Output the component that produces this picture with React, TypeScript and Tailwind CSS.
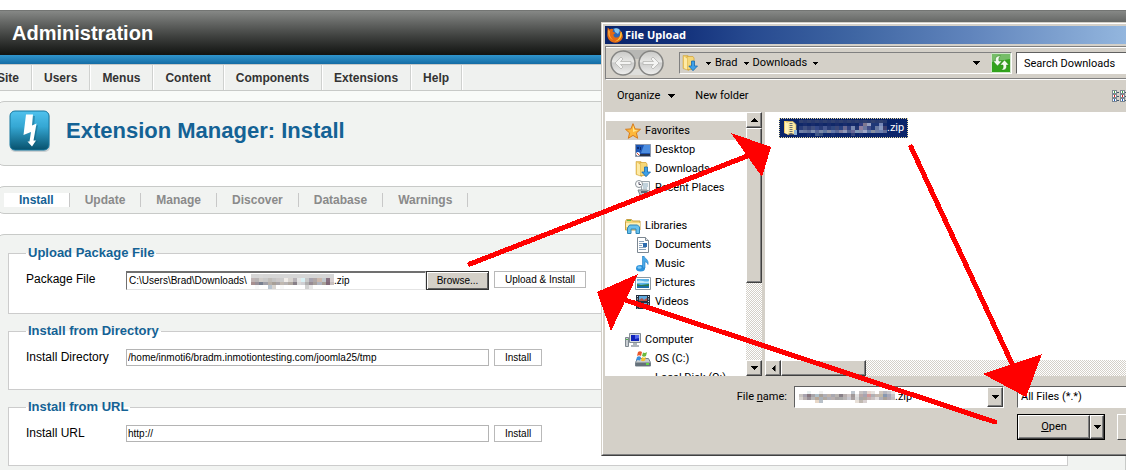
import React from "react";

const dialogFont = "font-['Roboto','Noto_Sans',sans-serif]";
const raised =
  "border border-t-white border-l-white border-r-[#404040] border-b-[#404040] bg-[#d4d0c8] shadow-[inset_-1px_-1px_0_#808080]";
const dither =
  "bg-[repeating-conic-gradient(#d4d0c8_0_25%,#ffffff_0_50%)] bg-[length:2px_2px]";

function Mosaic({ rows, className }: { rows: string[][]; className: string }) {
  return (
    <svg
      className={className}
      viewBox={`0 0 ${rows[0].length} ${rows.length}`}
      preserveAspectRatio="none"
      shapeRendering="crispEdges"
      aria-hidden="true"
    >
      {rows.map((row, y) =>
        row.map((c, x) => <rect key={`${x}-${y}`} x={x} y={y} width="1" height="1" fill={c} />)
      )}
    </svg>
  );
}

const w = "#ffffff";
const pathMosaic = [
  ["#d6d6d6", "#d6d6d6", "#d8d8d8", "#d6d6d6", "#d6d6d6", "#d6d6d6", "#d6d6d6", "#d6d6d6", "#d6d6d6", "#d6d6d6", "#d6d6d6", "#d6d6d6", "#d6d6d6", "#d6d6d6", "#d6d6d6", "#d6d6d6", "#d6d6d6", "#d6d6d6", "#d6d6d6", "#d6d6d6"],
  ["#c0b4b4", "#b8b4b4", "#d0ccc8", "#c8c8c8", "#c0bcb8", "#c4c4c4", "#ccc8c8", "#cccccc", "#f0ece8", "#d8d4d0", "#b8b4b8", "#e4e4e4", "#d8f0f4", "#c8c8c8", "#a8a4b0", "#b0a8a8", "#ccb8ac", "#c0c8cc", "#887080", "#d8d0d0"],
  ["#a89090", "#989098", "#788090", "#a0a0a8", "#b8b0a8", "#a8a098", "#a8a4a8", "#c0b8b0", "#b8b4b4", "#b0a8a0", "#888088", "#d8d8d8", "#d0d0d4", "#b0b0b0", "#988c94", "#a8a09c", "#b0b4c0", "#a8a098", "#806878", "#c8c0c0"],
  [w, "#f8f8f8", w, w, "#b8c4d0", "#d8d4d0", w, "#f8f8f8", w, w, w, w, w, "#d0d0d0", "#e8e8e8", w, w, w, w, w],
];
const selectedMosaic = [
  ["#304070", "#283a70", "#304070", "#283a70", "#304070", "#283a70", "#304070", "#283a70", "#304070", "#283a70", "#304070", "#283a70", "#304070", "#283a70", "#304070", "#283a70", "#304070", "#283a70", "#304070", "#283a70", "#304070", "#283a70"],
  ["#102868", "#182c6c", "#102868", "#182c6c", "#102868", "#182c6c", "#102868", "#182c6c", "#102868", "#182c6c", "#102868", "#182c6c", "#102868", "#182c6c", "#102868", "#303c80", "#807890", "#98a0c0", "#203878", "#203878", "#7888b8", "#182c6c"],
  ["#283c78", "#405080", "#304078", "#405080", "#344888", "#283c78", "#485890", "#283c78", "#304880", "#3c4878", "#284080", "#686890", "#304080", "#7888b0", "#203470", "#9080a0", "#6c78a0", "#404c88", "#203878", "#6878a0", "#8898c0", "#404070"],
  ["#7080a8", "#6878a0", "#5c6c98", "#8090b0", "#586898", "#7888a8", "#6078a0", "#8088a0", "#6478a8", "#586898", "#8080a0", "#9098b8", "#506090", "#686898", "#8098b8", "#8890b0", "#a0a8c8", "#6078a8", "#8890a0", "#7080a8", "#6c80b0", "#606c98"],
  ["#0a246a", "#0a246a", "#142c70", "#0a246a", "#405888", "#304878", "#0a246a", "#0a246a", "#142c70", "#0a246a", "#0a246a", "#0a246a", "#0a246a", "#304078", "#0a246a", "#142c70", "#0a246a", "#0a246a", "#0a246a", "#0a246a", "#0a246a", "#0a246a"],
];
const nameMosaic = [
  [w, w, "#e8f0f0", w, w, "#f0f0f0", w, w, w, w, w, w, w, "#c0c8d0", w, "#c8c4c4", "#b8b8c0", "#e8d8d0", "#e8e4e0", w, "#d0c8c0", "#b8b8c0", "#c8c8cc", "#e4e0e0"],
  ["#c8c4c0", "#a8a4b0", "#887880", "#a8a4a8", "#b0c0c8", "#a8a098", "#b0b0b8", "#c0b4ac", "#a8a8b0", "#b8b4b0", "#888088", "#b8b0b0", "#d0c8c8", "#a09898", "#e0e0e0", "#b8a8a8", "#a8a4b0", "#d09898", "#b0b0b4", "#c4b8b0", "#c0b8a8", "#8898b0", "#a8a8b8", "#c8c4c8"],
  ["#d8d4d0", "#b8b0b0", "#989098", "#b8b8b8", "#b8a898", "#a8b0b8", "#b0a8a0", "#b0b0b8", "#b8b0b0", "#a8a4a4", "#a8a8a8", "#b8b4b4", "#c8c8d0", "#a8a0a0", "#d8d8d8", "#a8a8a8", "#b0a8a0", "#c4b0b0", "#c8c0c0", "#e0dcdc", "#b0b0b8", "#a8a098", "#b0a8b0", "#c0bcc0"],
  [w, w, w, w, "#e8d8c8", "#b8c0c8", w, w, w, w, w, w, w, w, "#e8e0d8", "#c0b8b0", "#d8d0d0", w, w, w, w, w, w, w],
];

function Caret({ className = "w-[7px] h-1" }: { className?: string }) {
  return (
    <svg className={`${className} shrink-0`} viewBox="0 0 7 4" shapeRendering="crispEdges" aria-hidden="true">
      <path d="M0 0h7v1h-1v1h-1v1h-1v1h-1v-1h-1v-1h-1v-1h-1z" fill="#000" />
    </svg>
  );
}

function FolderArrow() {
  return (
    <svg className="size-4 shrink-0" viewBox="0 0 16 16" aria-hidden="true">
      <path d="M1 .5h5l1 2v13l-6-2z" fill="#efc863" stroke="#c9a33b" strokeWidth=".5" />
      <path d="M5 1.500h6l1 1.500v11.500H5z" fill="#f5d778" stroke="#d5a73e" strokeWidth=".8" />
      <path d="M2 1.500l3 2v11l-3-1.500z" fill="#fdeaa6" />
      <path d="M9.500 6h3v5h3L11 15.700 6.800 11h2.700z" fill="#3da0e8" stroke="#1768ae" strokeWidth=".8" />
    </svg>
  );
}

const icons: Record<string, React.ReactNode> = {
  Favorites: (
    <>
      <path d="M8 .7l2.100 5.200 5.400.4-4.100 3.600 1.300 5.400L8 12.400l-4.700 2.900 1.300-5.400L.5 6.300l5.400-.4z" fill="#fdb83a" stroke="#d77c1c" />
      <path d="M8 2.500L9.500 7l3.500.3L8 9z" fill="#ffe68a" />
    </>
  ),
  Desktop: (
    <>
      <path d="M.5 2.500h15v12H.5z" fill="#1d56b5" stroke="#8f9aae" />
      <path d="M9 3h6v8H6z" fill="#4b8de0" />
      <path d="M1 12h14v2H1z" fill="#25324a" />
      <path d="M2 5h2v2H2zM5 5h1v3H5z" fill="#0b2b70" />
      <circle cx="3" cy="12" r="2" fill="#fff" />
      <path d="M2 11h1v1H2zM3 12h1v1H3z" fill="#e14a2a" />
    </>
  ),
  "Recent Places": (
    <>
      <path d="M6.500 1.500h8v9h-8z" fill="#f3f5f6" stroke="#9aa4aa" />
      <path d="M8 4h5M8 6h5M8 8h4" stroke="#8faec0" />
      <path d="M3 10h9l3 5H5z" fill="#c2c9ce" stroke="#78838a" />
      <path d="M6 12h6" stroke="#5c6a73" strokeWidth="2" />
      <circle cx="4" cy="4" r="3.500" fill="#fff" stroke="#8b949a" />
      <path d="M4 2v2.500h2" fill="none" stroke="#556" />
    </>
  ),
  Libraries: (
    <>
      <path d="M.5 3.500l1-2h5l1 1.500h7.500v9H.5z" fill="#f3d678" stroke="#c8a144" />
      <path d="M1 5h14v4H1z" fill="#fdf0b5" />
      <path d="M2 2h4v1H2z" fill="#65b947" />
      <path d="M2.500 15.500V10l2-3h8l2 2v6.500H11V11H6v4.500z" fill="#66c1ed" stroke="#3086b7" />
    </>
  ),
  Documents: (
    <>
      <path d="M2.500.5h8l3 3v12h-11z" fill="#fff" stroke="#7c8791" />
      <path d="M10.500.5v3h3" fill="#dfe5ea" stroke="#7c8791" />
      <path d="M4 4.500h5M4 6.500h4M4 8.500h3M4 10.500h7M4 12.500h7" stroke="#8ba4bc" />
      <path d="M8 6h4v4H8z" fill="#2c6caf" />
    </>
  ),
  Music: (
    <>
      <ellipse cx="5.500" cy="12.300" rx="4.500" ry="3.300" fill="#2b93dc" />
      <ellipse cx="4.500" cy="11.500" rx="2" ry="1.200" fill="#7cc6f4" />
      <path d="M7.500 0H9c.4 2.500 5 3.500 4 8.500C12.500 6.500 11 6 10 5.800V12H7.500z" fill="#4aa9e8" stroke="#1f7ac2" strokeWidth=".6" />
    </>
  ),
  Pictures: (
    <>
      <path d="M.5 2.500h15v12H.5z" fill="#fff" stroke="#8e99a2" />
      <path d="M2 4h12v9H2z" fill="#5bb3e8" />
      <path d="M2 6c4-2 8 2 12 0v2H2z" fill="#c3e8f7" />
      <path d="M2 9l4 1 8-1v2H2z" fill="#2d7a4c" />
      <path d="M2 11h12v2H2z" fill="#1b6da7" />
    </>
  ),
  Videos: (
    <>
      <path d="M1 1h14v14H1z" fill="#243040" />
      <path d="M4 2h8v5H4z" fill="#5da6dc" />
      <path d="M4 9h8v5H4z" fill="#5da6dc" />
      <path d="M4 6l3-2 2 2 3-2v3H4zM4 13l3-2 5-1v4H4z" fill="#b65145" />
      <path d="M2.500 2v13M13.500 2v13" stroke="#e8ecef" strokeDasharray="1 1.500" />
    </>
  ),
  Computer: (
    <>
      <path d="M.5 5.500h3v9h-3z" fill="#c7ccd1" stroke="#7f8890" />
      <path d="M1 7h2v1H1z" fill="#4bb944" />
      <path d="M4.500 1.500h11v9h-11z" fill="#d8dce0" stroke="#838d96" />
      <path d="M6 3h8v6H6z" fill="#1022b8" />
      <path d="M10 3h4v3l-4 1z" fill="#5468ee" />
      <path d="M8 11h4v2h2v2H6v-2h2z" fill="#aeb5bb" />
    </>
  ),
  "OS (C:)": (
    <>
      <path d="M2.500 7.500h11l2 4v3.500H.5v-3.500z" fill="#c5ccd0" stroke="#74808a" />
      <path d="M1 11.500h14V15H1z" fill="#65717a" />
      <path d="M11 12h3v2h-3z" fill="#62d544" />
      <path d="M3 1q2-1.500 4 0L6 5Q4 3.500 2 5z" fill="#e9572b" />
      <path d="M8 1.500q2 1 4-.5l-1 4q-2 1.500-4 0z" fill="#6bb93b" />
      <path d="M2 6q2-1.500 4 0l-1 3.500q-2-1-4 0z" fill="#3a8fda" />
      <path d="M7 6q2 1.500 4 0l-1 3.500q-2 1.500-4 0z" fill="#f6c12c" />
    </>
  ),
};

function TreeRow({ name, root = false }: { name: string; root?: boolean }) {
  return (
    <button
      type="button"
      className={`flex h-[19px] w-full shrink-0 items-center gap-1 text-left whitespace-nowrap ${
        root ? "pl-[19px]" : "pl-[29px]"
      } ${name === "Favorites" ? "bg-[#d4d0c8]" : ""}`}
    >
      {name === "Downloads" ? (
        <FolderArrow />
      ) : (
        <svg className="size-4 shrink-0" viewBox="0 0 16 16" aria-hidden="true">
          {icons[name]}
        </svg>
      )}
      <span className="leading-[17px]">{name}</span>
    </button>
  );
}

function Firefox() {
  return (
    <svg className="size-4 shrink-0" viewBox="0 0 16 16" aria-hidden="true">
      <circle cx="8.500" cy="7.500" r="6.500" fill="#2a67b8" />
      <path d="M7 2c2-1.500 5-.5 6 1.500L11 7 8 5z" fill="#86c8ef" />
      <path d="M.7.500l2 2C4 1.500 5 1.700 6.500 2.500L5.500 4.500 8.500 6 6.500 7.500c-.5 3 4 4.300 6 1.500 1.300-2 .7-4-.5-6 3 2 4.500 5 3.500 8-1.300 3.500-4.500 4.800-7.500 4.700C3.500 15.500.3 12 .3 8c0-2.500.2-5 .4-7.500z" fill="#e36a14" />
      <path d="M14.500 4.500c1.200 5-1.500 9.800-7 10 3-1 5.800-3.400 5.800-8z" fill="#fccb3c" />
      <path d="M1.200 2.500L3 4.500c-.8 3 .2 6 3 8.500C2 11.500.5 7 1.200 2.500z" fill="#f8a43a" />
    </svg>
  );
}

function NavOrbs() {
  return (
    <svg className="h-7 w-[54px] shrink-0" viewBox="0 0 54 28" aria-hidden="true">
      <defs>
        <linearGradient id="orb" x1="0" y1="0" x2="0" y2="1">
          <stop offset="0" stopColor="#c8c8c6" />
          <stop offset=".45" stopColor="#e8e8e6" />
          <stop offset=".5" stopColor="#cccccb" />
          <stop offset="1" stopColor="#f0f0ef" />
        </linearGradient>
      </defs>
      <path d="M13 1h28v5q-14 8-28 0z" fill="#b7b7b4" />
      <path d="M13 26q14-12 28 0z" fill="#dededb" />
      <circle cx="13" cy="14" r="12" fill="url(#orb)" stroke="#858583" strokeWidth="1.500" />
      <circle cx="41" cy="14" r="12" fill="url(#orb)" stroke="#858583" strokeWidth="1.500" />
      <path d="M5 14l6-6 2 2-2.500 2.500H21v3H10.500L13 18l-2 2z" fill="#f4f4f3" stroke="#b5b5b3" strokeWidth=".8" />
      <path d="M49 14l-6-6-2 2 2.500 2.500H33v3h10.500L41 18l2 2z" fill="#f4f4f3" stroke="#b5b5b3" strokeWidth=".8" />
    </svg>
  );
}

function FileDialog() {
  return (
    <section
      aria-label="File Upload"
      className={`absolute top-[22px] right-0 left-[601px] overflow-hidden border border-r-0 border-[#d4d0c8] border-b-[#404040] bg-[#d4d0c8] text-[11px] leading-4 text-black ${dialogFont}`}
    >
      <div className="border-t border-b border-l border-t-white border-b-[#808080] border-l-white pt-[2px] pb-[14px] pl-[2px]">
        <header className="flex h-[18px] items-center gap-[2px] bg-[linear-gradient(90deg,#0a246a_0%,#12307a_14%,#274a90_28%,#3f66a3_48%,#6084bc_70%,#7fa2d0_88%,#93b6de_100%)] pl-[2px] text-white">
          <Firefox />
          <h2 className="font-['Noto_Sans',sans-serif] font-bold">File Upload</h2>
        </header>

        <div className="mt-[2px] flex h-[34px] items-center border-t border-b border-l border-[#808080] border-b-white pl-1 shadow-[inset_0_1px_0_#fff,inset_0_-1px_0_#808080]">
          <NavOrbs />
          <div className="ml-[15px] flex h-[22px] min-w-0 flex-1 items-center border border-t-[#808080] border-r-white border-b-white border-l-[#808080] pl-[2px]">
            <FolderArrow />
            <span className="ml-2"><Caret className="h-[3px] w-[5px]" /></span>
            <span className="ml-1">Brad</span>
            <span className="ml-[6px]"><Caret className="h-[3px] w-[5px]" /></span>
            <span className="ml-1">Downloads</span>
            <span className="ml-[6px]"><Caret className="h-[3px] w-[5px]" /></span>
            <span className="flex-1" />
            <Caret />
            <button type="button" aria-label="Refresh" className="ml-[11px]">
              <svg className="size-5" viewBox="0 0 20 20" aria-hidden="true">
                <path d="M.5.5h19v19H.5z" fill="#32a31c" stroke="#cfe6c9" />
                <path d="M1 1h18v5L1 9z" fill="#76bd68" />
                <path d="M9.500 3C5 2.500 4 5 4.500 8H2l4.500 5 4.500-5H8c-.5-2 0-4 1.500-5z" fill="#f2fbef" stroke="#257b17" strokeWidth=".5" />
                <path d="M10.500 17c4.500.5 5.500-2 5-5H18l-4.500-5L9 12h3c.5 2 0 4-1.500 5z" fill="#f2fbef" stroke="#257b17" strokeWidth=".5" />
              </svg>
            </button>
          </div>
          <input
            aria-label="Search"
            placeholder="Search Downloads"
            className="ml-1 h-[22px] w-[110px] border border-r-0 border-t-[#606060] border-b-white border-l-[#606060] bg-white pl-[7px] placeholder:text-black placeholder:opacity-100"
          />
        </div>

        <div className="flex h-8 items-center pl-3">
          <button type="button" className="flex items-center gap-2">
            Organize <Caret />
          </button>
          <button type="button" className="ml-5">New folder</button>
          <span className="flex-1" />
          <svg className="h-3 w-[14px]" viewBox="0 0 14 12" shapeRendering="crispEdges" aria-hidden="true">
            {[0, 8].map((x) =>
              [0, 4, 8].map((y) => (
                <g key={`${x}-${y}`}>
                  <path d={`M${x + 0.5} ${y + 0.5}h4v3h-4z`} fill="#fff" stroke="#7d8791" />
                  <path d={`M${x + 2} ${y + 1}h1v2h-1z`} fill={y === 0 ? "#3fa34a" : y === 4 ? "#e02020" : "#1d5fc0"} />
                  <path d={`M${x + 5} ${y + 2}h2v1h-2z`} fill="#40566b" />
                </g>
              ))
            )}
          </svg>
        </div>

        <div className="flex h-[264px]">
          <nav aria-label="Places" className="flex w-[141px] shrink-0 flex-col overflow-hidden bg-white pt-[9px] pl-px">
            <TreeRow name="Favorites" root />
            <TreeRow name="Desktop" />
            <TreeRow name="Downloads" />
            <TreeRow name="Recent Places" />
            <div className="h-[19px] shrink-0" />
            <TreeRow name="Libraries" root />
            <TreeRow name="Documents" />
            <TreeRow name="Music" />
            <TreeRow name="Pictures" />
            <TreeRow name="Videos" />
            <div className="h-[19px] shrink-0" />
            <TreeRow name="Computer" root />
            <TreeRow name="OS (C:)" />
            <TreeRow name="Local Disk (Q:)" />
          </nav>
          <div className={`flex w-4 shrink-0 flex-col ${dither}`}>
            <button type="button" aria-label="Scroll up" className={`grid h-4 place-items-center ${raised}`}>
              <Caret className="h-1 w-[7px] rotate-180" />
            </button>
            <div className={`h-[155px] ${raised}`} />
            <div className="flex-1" />
            <button type="button" aria-label="Scroll down" className={`grid h-4 place-items-center ${raised}`}>
              <Caret />
            </button>
          </div>
          <div className="w-[3px] shrink-0" />
          <div className="flex min-w-0 flex-1 flex-col bg-white">
            <div className="flex-1 pt-[6px] pl-[14px]">
              <button type="button" className="flex h-5 w-[129px] items-center border border-dotted border-[#e8dca0] bg-[#0a246a] pl-[3px] text-white">
                <svg className="size-4 shrink-0" viewBox="0 0 16 16" aria-hidden="true">
                  <path d="M1 1h4l1 2v12l-5-2z" fill="#efc863" />
                  <path d="M4 1.500h6l3 3V14H4z" fill="#fae9a3" stroke="#d5b256" strokeWidth=".7" />
                  <path d="M2 1.500l3 2v11l-3-1.500z" fill="#fff1b9" />
                  <path d="M8 3v11" stroke="#6b7075" strokeWidth="3" strokeDasharray="1 1" />
                  <path d="M11 10h3v5h-3z" fill="#8fb6d8" />
                </svg>
                <Mosaic rows={selectedMosaic} className="h-4 w-[88px] shrink-0" />
                <span>.zip</span>
              </button>
            </div>
            <div className={`flex h-4 ${dither}`}>
              <button type="button" aria-label="Scroll left" className={`grid w-4 place-items-center ${raised}`}>
                <Caret className="h-1 w-[7px] rotate-90" />
              </button>
              <div className={`w-[85px] ${raised}`} />
            </div>
          </div>
        </div>

        <div className="mt-[10px] flex items-center">
          <label htmlFor="filename" className="w-[189px] shrink-0 pr-[7px] text-right">
            File <u>n</u>ame:
          </label>
          <div className="flex h-[22px] min-w-0 flex-1 items-center border border-t-[#606060] border-r-white border-b-white border-l-[#606060] bg-white pl-1">
            <Mosaic rows={nameMosaic} className="h-3 w-24 shrink-0" />
            <input id="filename" defaultValue=".zip" className="min-w-0 flex-1" />
            <button type="button" aria-label="File name history" className={`grid h-5 w-4 place-items-center ${raised}`}>
              <Caret />
            </button>
          </div>
          <select
            aria-label="File type"
            className="ml-[13px] h-[22px] w-[109px] appearance-none border border-r-0 border-t-[#606060] border-b-white border-l-[#606060] bg-white pl-[3px]"
          >
            <option>All Files (*.*)</option>
          </select>
        </div>

        <div className="mt-[6px] flex h-[26px] justify-end">
          <div className="flex w-[88px] border border-black">
            <button type="button" className={`flex-1 text-center ${raised}`}>
              <u>O</u>pen
            </button>
            <button type="button" aria-label="Open options" className={`grid w-[14px] place-items-center ${raised}`}>
              <Caret />
            </button>
          </div>
          <button type="button" aria-label="Cancel" className="ml-3 w-[9px] border border-r-0 border-t-white border-b-[#404040] border-l-white" />
        </div>
      </div>
    </section>
  );
}

const smallButton = "h-[17px] border border-[#b9b9b9] bg-white px-[10px] text-[10px] leading-[15px] text-black";
const textBox = "h-[17px] w-[363px] border border-[#b4b4b4] bg-white px-px text-[10px] leading-[15px] text-black";

function Group({ title, children }: { title: string; children: React.ReactNode }) {
  return (
    <fieldset className="border border-[#cccccc] bg-white px-[17px] pt-[10px] pb-[23px]">
      <legend className="px-[2px] text-[13px] leading-4 font-bold text-[#146295]">{title}</legend>
      <div className="flex items-start">{children}</div>
    </fieldset>
  );
}

export default function App() {
  return (
    <div className="relative h-screen overflow-hidden bg-white pt-[10px] font-['Liberation_Sans',Arial,sans-serif] text-xs text-black">
      <header className="flex h-[45px] items-center border-t border-[#737573] bg-linear-to-b from-[#868886] to-[#121412] pl-3">
        <h1 className="text-xl font-bold text-white">Administration</h1>
      </header>
      <div className="h-[9px] bg-linear-to-b from-[#3095cd] to-[#146da5]" />
      <nav aria-label="Main menu" className="-ml-[15px] flex h-[27px] border-t border-b border-[#c8cac8] bg-[#eff1ef] font-bold text-[#333333]">
        {["Site", "Users", "Menus", "Content", "Components", "Extensions", "Help"].map((t) => (
          <a key={t} href="#" className="flex items-center border-r border-[#cfd1cf] px-3 shadow-[1px_0_0_#fff]">
            {t}
          </a>
        ))}
      </nav>

      <main className="bg-white">
        <div className="h-[10px] bg-[#f9fbf9]" />
        <div className="-ml-1 flex h-[65px] items-center rounded-lg border border-[#c8cac8] bg-[#f1f3f1] pb-[5px] pl-3">
          <svg className="size-[42px]" viewBox="0 0 42 42" aria-hidden="true">
            <defs>
              <linearGradient id="bolt" x1="0" y1="0" x2="0" y2="1">
                <stop offset="0" stopColor="#50c2ee" />
                <stop offset=".4" stopColor="#35a7d3" />
                <stop offset="1" stopColor="#07516d" />
              </linearGradient>
            </defs>
            <rect x="1" y="2" width="40" height="40" rx="5" fill="#cbd0d2" />
            <rect x="1" y="1" width="39" height="39" rx="5" fill="url(#bolt)" stroke="#17779e" />
            <path d="M18 6h8l-1 11 4-2-3 16h3l-6 6-4-6h3l1-10-8 4z" fill="#0b5573" opacity=".4" />
            <path d="M17 4.500h7l-1 11 4.500-2-3 17h2.500l-4 6-4.500-5h2l1.500-9.500-7.500 3z" fill="#fff" />
          </svg>
          <h2 className="ml-[15px] text-[22px] font-bold text-[#146295]">Extension Manager: Install</h2>
        </div>

        <nav aria-label="Extension manager" className="-ml-1 mt-5 flex h-7 items-center rounded-lg border border-[#c8cac8] bg-[#f1f3f1] pl-[7px] font-bold text-[#8a8a8a]">
          {["Install", "Update", "Manage", "Discover", "Database", "Warnings"].map((t) => (
            <a
              key={t}
              href="#"
              className={`border-r border-[#c8c8c8] px-[15px] leading-[14px] ${t === "Install" ? "bg-white text-[#146295]" : ""}`}
            >
              {t}
            </a>
          ))}
        </nav>

        <div className="-ml-1 mt-5 flex flex-col gap-[9px] rounded-t-lg border border-[#c8cac8] bg-[#f1f3f1] pt-[10px] pr-[57px] pb-5 pl-[11px]">
          <Group title="Upload Package File">
            <label htmlFor="package" className="w-[100px]">Package File</label>
            <div className="flex h-[19px] w-[300px] items-center border border-t-2 border-t-[#707070] border-r-[#e4e4e4] border-b-[#e4e4e4] border-l-[#707070] bg-white pl-[2px] text-[10px] leading-4">
              <input id="package" readOnly defaultValue="C:\Users\Brad\Downloads\" className="w-[122px]" />
              <Mosaic rows={pathMosaic} className="h-[15px] w-[83px] shrink-0" />
              <span>.zip</span>
            </div>
            <button type="button" className="h-[19px] w-[63px] border border-[#333333] bg-[#d4d0c8] text-[10px] leading-4 shadow-[inset_1px_1px_0_#fff,inset_-1px_-1px_0_#606060]">
              Browse...
            </button>
            <button type="button" className={`ml-[5px] ${smallButton}`}>Upload &amp; Install</button>
          </Group>
          <Group title="Install from Directory">
            <label htmlFor="directory" className="w-[100px]">Install Directory</label>
            <input id="directory" defaultValue="/home/inmoti6/bradm.inmotiontesting.com/joomla25/tmp" className={textBox} />
            <button type="button" className={`ml-[5px] ${smallButton}`}>Install</button>
          </Group>
          <Group title="Install from URL">
            <label htmlFor="url" className="w-[100px]">Install URL</label>
            <input id="url" defaultValue="http://" className={textBox} />
            <button type="button" className={`ml-[5px] ${smallButton}`}>Install</button>
          </Group>
        </div>
      </main>

      <FileDialog />

      <svg className="pointer-events-none absolute top-0 left-0 h-[470px] w-[1126px]" viewBox="0 0 1126 470" shapeRendering="crispEdges" aria-hidden="true">
        <g stroke="#ff0000" strokeWidth="5" strokeLinecap="round">
          <path d="M470 264L750 155" />
          <path d="M911 147L1014 368" />
          <path d="M995 422L622 299" />
        </g>
        <g fill="#ff0000">
          <path d="M731 133L771 147L762 177Z" />
          <path d="M983 374L1042 354L1026 397Z" />
          <path d="M597 292L638 274L611 331Z" />
        </g>
      </svg>
    </div>
  );
}
